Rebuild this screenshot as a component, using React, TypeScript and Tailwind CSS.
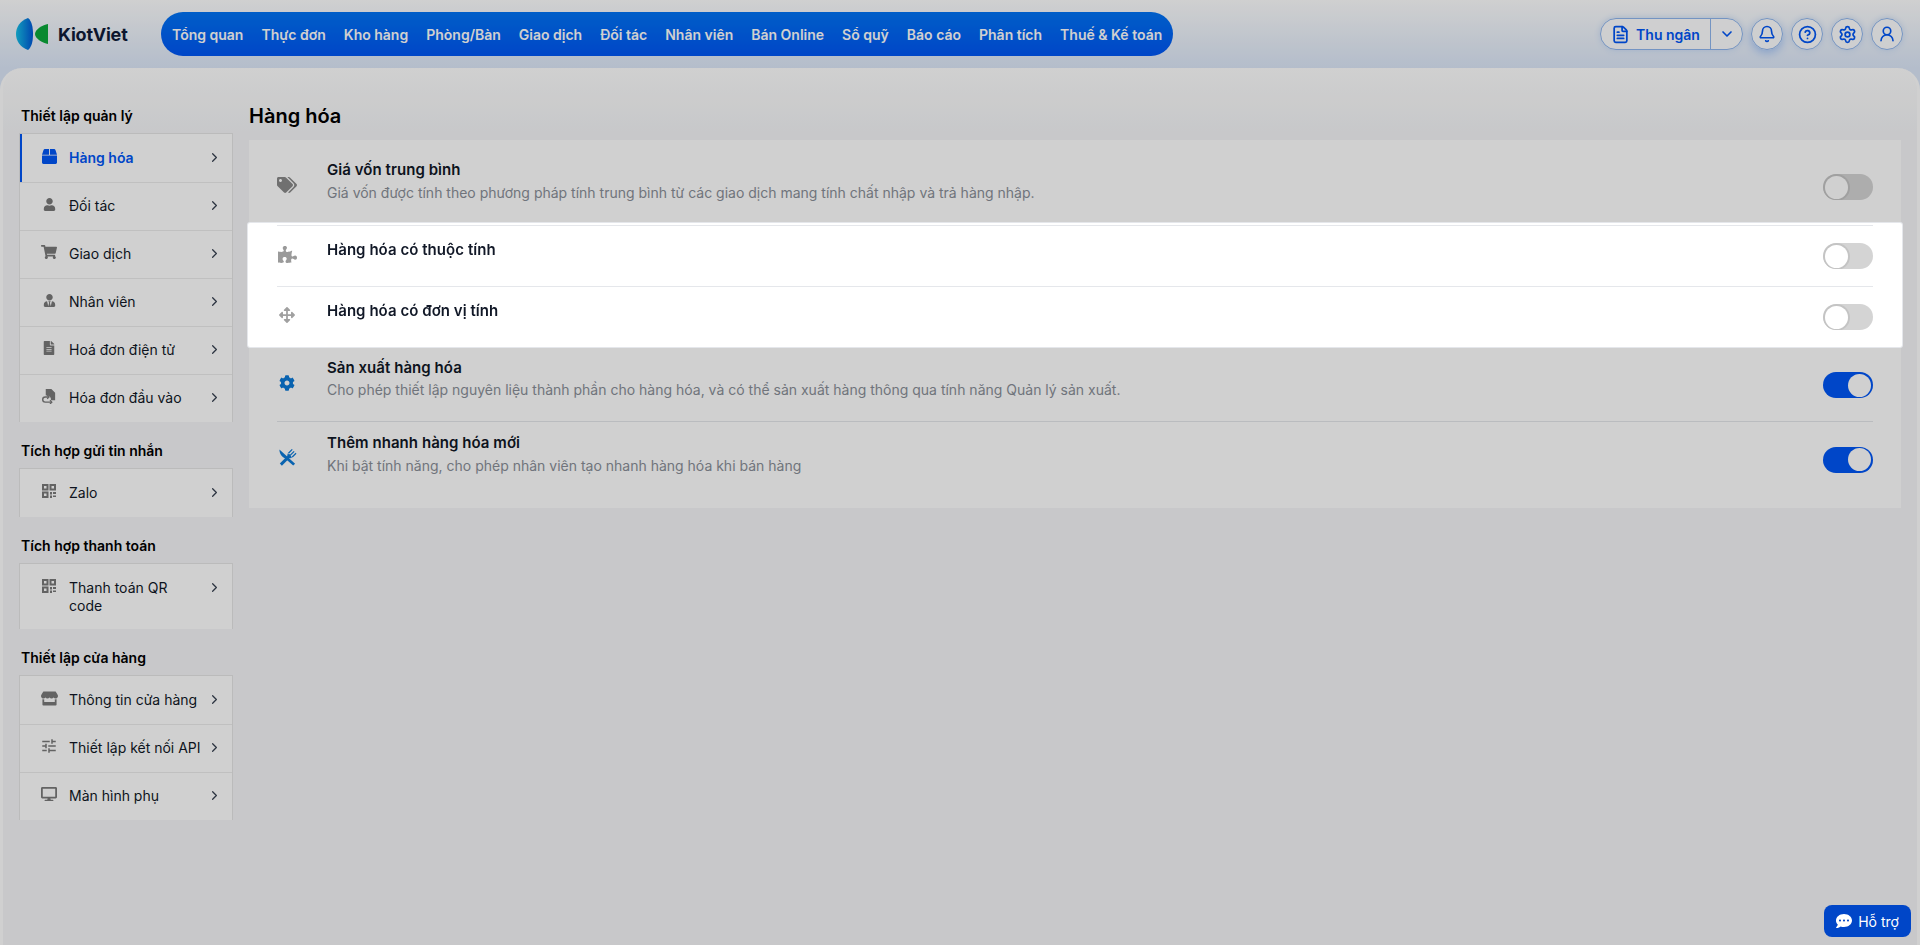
import React from 'react';
import { Bell, ChevronDown, ChevronRight, CircleHelp, FileText, Settings, UserRound } from 'lucide-react';
import {
  FaArrowsAlt,
  FaBox,
  FaCog,
  FaCommentDots,
  FaDesktop,
  FaFileAlt,
  FaPuzzlePiece,
  FaShoppingCart,
  FaStore,
  FaTags,
  FaUser,
  FaUserTie,
} from 'react-icons/fa';
import { MdTune } from 'react-icons/md';

const navItems = [
  'Tổng quan',
  'Thực đơn',
  'Kho hàng',
  'Phòng/Bàn',
  'Giao dịch',
  'Đối tác',
  'Nhân viên',
  'Bán Online',
  'Sổ quỹ',
  'Báo cáo',
  'Phân tích',
  'Thuế & Kế toán',
];

const QrIcon = ({ className }: { className?: string }) => (
  <svg viewBox="0 0 14 14" className={className} fill="none" stroke="currentColor">
    <rect x="1" y="1" width="4.5" height="4.5" strokeWidth="2" />
    <rect x="8.5" y="1" width="4.5" height="4.5" strokeWidth="2" />
    <rect x="1" y="8.5" width="4.5" height="4.5" strokeWidth="2" />
    <path d="M8 8h2v2.5H8zM11 8h3v2h-3zM8 11.5h2V14H8zM11 11.5h3V13h-3z" fill="currentColor" stroke="none" />
  </svg>
);

const InvoiceInIcon = ({ className }: { className?: string }) => (
  <svg viewBox="0 0 16 16" className={className} fill="none">
    <path d="M4 0h6l4 4v8H9.5c.4-3-1.500-5-5.500-5V0Z" fill="currentColor" />
    <path d="M7 8.500H3.500a2.700 2.700 0 0 0 0 5.500H10" stroke="currentColor" strokeWidth="1.500" />
    <path d="M5.500 6.500 7.500 8.500 5.500 10.500M8.500 12l2 2-2 2" stroke="currentColor" strokeWidth="1.300" />
  </svg>
);

const CutleryIcon = ({ className }: { className?: string }) => (
  <svg viewBox="0 0 20 20" className={className} fill="none" stroke="currentColor">
    <path d="M1.500 1.500 18 16.500 16 18.500 7.500 11C4 9 1.500 6 1.500 1.500Z" fill="currentColor" strokeWidth="0" />
    <path d="M3 17.500 13 7.500" strokeWidth="3" />
    <path d="M11 5.500 15 1.500M13 7.500 17 3.500M15 9.500 19 5.500" strokeWidth="1.300" />
    <path d="M10.500 6 14.500 10 12.500 10.500 10 8Z" fill="currentColor" strokeWidth="0.500" />
  </svg>
);

const sidebarGroups = [
  {
    title: 'Thiết lập quản lý',
    items: [
      { label: 'Hàng hóa', icon: <FaBox className="size-[15px]" />, active: true },
      { label: 'Đối tác', icon: <FaUser className="size-[13px]" /> },
      { label: 'Giao dịch', icon: <FaShoppingCart className="size-[16px]" /> },
      { label: 'Nhân viên', icon: <FaUserTie className="size-[13px]" /> },
      { label: 'Hoá đơn điện tử', icon: <FaFileAlt className="size-[14px]" /> },
      { label: 'Hóa đơn đầu vào', icon: <InvoiceInIcon className="size-[15px]" /> },
    ],
  },
  {
    title: 'Tích hợp gửi tin nhắn',
    items: [{ label: 'Zalo', icon: <QrIcon className="size-[14px]" /> }],
  },
  {
    title: 'Tích hợp thanh toán',
    items: [{ label: 'Thanh toán QR code', icon: <QrIcon className="size-[14px]" />, tall: true }],
  },
  {
    title: 'Thiết lập cửa hàng',
    items: [
      { label: 'Thông tin cửa hàng', icon: <FaStore className="size-[17px]" /> },
      { label: 'Thiết lập kết nối API', icon: <MdTune className="size-[18px]" /> },
      { label: 'Màn hình phụ', icon: <FaDesktop className="size-[16px]" /> },
    ],
  },
];

const Toggle = ({ on }: { on?: boolean }) => (
  <div
    className={`mt-[4px] flex h-[26px] w-[50px] shrink-0 items-center overflow-hidden rounded-full px-[2px] ${
      on ? 'justify-end bg-[#0056f5]' : 'justify-start bg-[#d4d4d4]'
    }`}
  >
    <div className={`size-[23px] rounded-full bg-white ${on ? '' : 'shadow-[0_0_0_2px_#c4c4c4]'}`} />
  </div>
);

const CircleButton = ({ children, glow }: { children: React.ReactNode; glow?: boolean }) => (
  <button
    className={`flex size-[32px] items-center justify-center rounded-full border border-[#8fb6ee] bg-white/90 text-[#0056f5] ${
      glow ? 'shadow-[0_3px_10px_#a4c5f7]' : 'shadow-[0_0_6px_#c6daf7]'
    }`}
  >
    {children}
  </button>
);

const Header = () => (
  <header className="flex h-[68px] shrink-0 items-start bg-gradient-to-b from-white to-[#dde8f9] pl-4 pr-[17px]">
    <div className="mt-[18px] flex w-[145px] shrink-0 items-center">
      <svg viewBox="0 0 32 32" className="h-[32px] w-[32px]">
        <defs>
          <linearGradient id="kvBlue" x1="0" y1="0" x2="1" y2="0">
            <stop offset="0" stopColor="#16c0e8" />
            <stop offset="1" stopColor="#0058d8" />
          </linearGradient>
        </defs>
        <path d="M12 0C4 3 0 9 0 16s4 13 12 16c4-3 5-10 5-16S16 3 12 0Z" fill="url(#kvBlue)" />
        <path d="M32 6v20c-5-1-13-5-13-10S27 7 32 6Z" fill="#0aa83c" />
      </svg>
      <span className="ml-[10px] text-[18px] font-bold tracking-[-0.2px] text-[#101c3a]">KiotViet</span>
    </div>
    <nav className="mt-3 flex h-[44px] items-center gap-[18px] rounded-[22px] bg-gradient-to-b from-[#0073f5] to-[#0056f5] px-[11px]">
      {navItems.map((item) => (
        <a key={item} className="text-[14px] font-semibold whitespace-nowrap text-white">
          {item}
        </a>
      ))}
    </nav>
    <div className="mt-[18px] ml-auto flex items-center gap-[8px]">
      <div className="flex h-[32px] w-[143px] items-center rounded-full border border-[#8fb6ee] bg-white/90 text-[#0056f5] shadow-[0_0_6px_#c6daf7]">
        <div className="flex h-full w-[110px] items-center justify-center gap-[6px] border-r border-[#8fb6ee] text-[14px] font-semibold">
          <FileText className="size-[19px]" strokeWidth={2.2} />
          Thu ngân
        </div>
        <div className="flex flex-1 items-center justify-center">
          <ChevronDown className="size-[16px]" strokeWidth={2.5} />
        </div>
      </div>
      <CircleButton glow>
        <Bell className="size-[18px]" strokeWidth={2.2} />
      </CircleButton>
      <CircleButton>
        <CircleHelp className="size-[19px]" strokeWidth={2.2} />
      </CircleButton>
      <CircleButton>
        <Settings className="size-[19px]" strokeWidth={2.2} />
      </CircleButton>
      <CircleButton>
        <UserRound className="size-[18px]" strokeWidth={2.2} />
      </CircleButton>
    </div>
  </header>
);

const Sidebar = () => (
  <aside className="w-[246px] shrink-0 pt-[38px] pl-[16px]">
    {sidebarGroups.map((group) => (
      <div key={group.title} className="mb-[19px]">
        <h3 className="mb-[7px] pl-[2px] text-[14px] leading-5 font-semibold text-black">{group.title}</h3>
        <div className="w-[214px] border-x border-t border-[#e6e6e6] bg-white">
          {group.items.map((item, i) => (
            <a
              key={item.label}
              className={`flex pr-[10px] text-[14px] leading-[18px] ${item.tall ? 'h-[65px]' : 'h-[48px]'} ${
                i > 0 ? 'border-t border-[#ececec] pt-[14px]' : 'pt-[15px]'
              } ${
                item.active
                  ? 'border-l-2 border-l-[#0056f5] pl-[18px] font-semibold text-[#0056f5]'
                  : 'pl-[20px] text-[#111827]'
              }`}
            >
              <span
                className={`mr-[11px] -mt-[1px] flex h-[16px] w-[18px] shrink-0 items-center justify-center ${
                  item.active ? 'text-[#0056f5]' : 'text-[#7a7a7a]'
                }`}
              >
                {item.icon}
              </span>
              <span className="w-[134px]">{item.label}</span>
              <ChevronRight className="mt-[1px] ml-auto size-[15px] shrink-0 text-[#374151]" strokeWidth={2} />
            </a>
          ))}
        </div>
      </div>
    ))}
  </aside>
);

const Row = ({
  icon,
  title,
  desc,
  on,
  tight,
  className,
}: {
  icon: React.ReactNode;
  title: string;
  desc?: string;
  on?: boolean;
  tight?: boolean;
  className?: string;
}) => (
  <div className={`flex ${className ?? ''}`}>
    <div className="flex w-[50px] shrink-0 items-center">
      <span className="flex w-[20px] justify-center">{icon}</span>
    </div>
    <div className="min-w-0 flex-1">
      <div className="text-[15px] leading-[22px] font-semibold tracking-[0.05px] text-[#111827]">{title}</div>
      {desc && (
        <div className={`text-[14px] leading-[22px] text-[#8a8f98] ${tight ? '' : 'mt-[1px]'}`}>{desc}</div>
      )}
    </div>
    <div className="flex items-center">
      <Toggle on={on} />
    </div>
  </div>
);

const Content = () => (
  <section className="min-w-0 flex-1 pt-[35px] pr-[16px]">
    <h1 className="mb-[11px] text-[20px] leading-[26px] font-semibold text-black">Hàng hóa</h1>
    <div className="h-[368px] bg-white px-[28px]">
      <Row
        className="h-[83px] pt-[19px] pb-[12px]"
        icon={<FaTags className="size-[20px] text-[#8a8a8a]" />}
        title="Giá vốn trung bình"
        desc="Giá vốn được tính theo phương pháp tính trung bình từ các giao dịch mang tính chất nhập và trả hàng nhập."
      />
      {/* 2 dong duoc lam noi len tren lop phu */}
      <div className="relative z-20 -mx-[29px] rounded-[2px] bg-white px-[29px] pt-[2px] shadow-[0_0_0_1px_#e5e7eb]">
        <Row
          className="h-[61px] border-t border-[#e5e7eb] pt-[13px] pb-[17px]"
          icon={<FaPuzzlePiece className="size-[19px] text-[#9a9a9a]" />}
          title="Hàng hóa có thuộc tính"
        />
        <Row
          className="h-[61px] border-t border-[#e5e7eb] pt-[13px] pb-[17px]"
          icon={<FaArrowsAlt className="size-[16px] text-[#a0a0a0]" />}
          title="Hàng hóa có đơn vị tính"
        />
      </div>
      <Row
        tight
        className="h-[74px] pt-[10px] pb-[12px]"
        icon={<FaCog className="size-[16px] text-[#0c7ad8]" />}
        title="Sản xuất hàng hóa"
        desc="Cho phép thiết lập nguyên liệu thành phần cho hàng hóa, và có thể sản xuất hàng thông qua tính năng Quản lý sản xuất."
        on
      />
      <Row
        className="h-[75px] border-t border-[#e5e7eb] pt-[10px] pb-[13px]"
        icon={<CutleryIcon className="size-[19px] text-[#0c7ad8]" />}
        title="Thêm nhanh hàng hóa mới"
        desc="Khi bật tính năng, cho phép nhân viên tạo nhanh hàng hóa khi bán hàng"
        on
      />
    </div>
  </section>
);

export default function App() {
  return (
    <div className="relative flex h-screen flex-col overflow-hidden bg-[#dde8f9] font-['Inter',sans-serif]">
      <Header />
      <main className="flex min-h-0 flex-1 rounded-t-[22px] border-x-[3px] border-white bg-[linear-gradient(#ffffff,#f5f6f8_64px)]">
        <Sidebar />
        <Content />
      </main>
      {/* lop phu toi */}
      <div className="fixed inset-0 z-10 bg-black/[0.185]" />
      <button className="fixed right-[9px] bottom-[8px] z-20 flex h-[32px] w-[87px] items-center justify-center gap-[6px] rounded-[8px] bg-[#0046c8] text-[14px] text-white">
        <FaCommentDots className="size-[16px]" />
        Hỗ trợ
      </button>
    </div>
  );
}
